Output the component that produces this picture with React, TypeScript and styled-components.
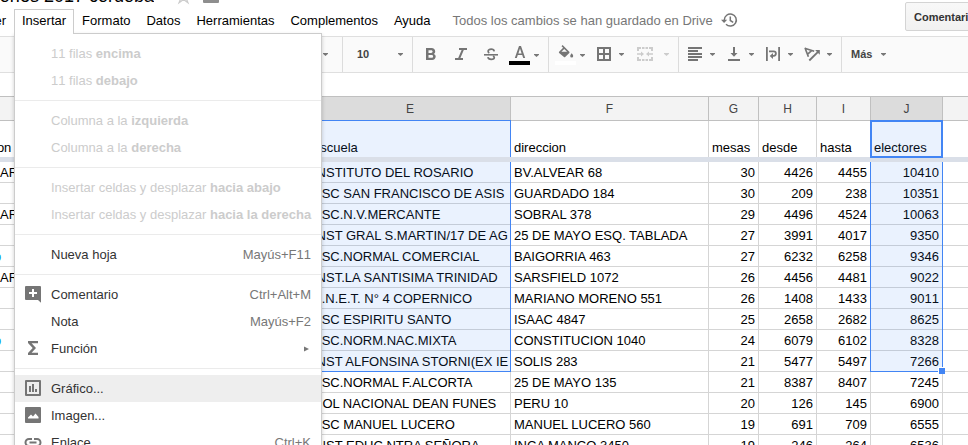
import React from "react";
import styled, { createGlobalStyle } from "styled-components";

const Global = createGlobalStyle`
  html, body { margin: 0; padding: 0; background: #fff; overflow: hidden; }
  * { box-sizing: border-box; }
  body { font: 13px "Liberation Sans", Arial, sans-serif; color: #000; }
  svg { display: block; flex: none; }
`;

const Screen = styled.div`
  position: relative;
  width: 968px;
  height: 445px;
  overflow: hidden;
  display: flex;
  flex-direction: column;
`;

/* ---------- title and menu bar ---------- */
const Header = styled.header`
  display: flex;
  height: 36px;
  flex: none;
`;
const HeaderMain = styled.div`
  width: 905px;
  flex: none;
`;
const TitleRow = styled.div`
  display: flex;
  height: 9px;
  overflow: hidden;
`;
const Title = styled.div`
  width: 154px;
  height: 9px;
  display: flex;
  justify-content: flex-end;
  align-items: flex-start;
  font-size: 18px;
  line-height: 20px;
  white-space: nowrap;
  overflow: hidden;
  span { margin-top: -14px; }
`;
const StarIcon = styled.svg`
  margin-left: 23px;
  margin-top: -13px;
`;
const FolderIcon = styled.svg`
  margin-left: 13px;
`;
const MenuBar = styled.nav`
  display: flex;
  height: 24px;
  line-height: 23px;
  white-space: nowrap;
`;
const MenuTitle = styled.div`
  padding: 0 8px;
`;
const CutTitle = styled.div`
  width: 14px;
  padding-right: 8px;
  display: flex;
  justify-content: flex-end;
  overflow: hidden;
`;
const SaveState = styled.div`
  margin-left: 14px;
  color: #777;
  display: flex;
  svg { margin: 2px 0 0 7px; }
`;
const CommentsButton = styled.button`
  width: 110px;
  height: 29px;
  margin-top: 2px;
  flex: none;
  padding: 0 8px;
  border: 1px solid #d4d4d4;
  border-radius: 2px;
  background: linear-gradient(#f8f8f8, #f1f1f1);
  font: bold 11px "Liberation Sans", Arial, sans-serif;
  line-height: 26px;
  color: #333;
  text-align: left;
`;

/* ---------- toolbar ---------- */
const Toolbar = styled.div`
  display: flex;
  flex: none;
  height: 37px;
  border-top: 1px solid #dfdfdf;
  border-bottom: 1px solid #dfdfdf;
  background: #fafafa;
`;
const Group = styled.div<{ $w: number; $last?: boolean }>`
  display: flex;
  width: ${(p) => p.$w}px;
  flex: none;
  border-right: ${(p) => (p.$last ? "none" : "1px solid #dcdcdc")};
  color: #757575;
`;
const ToolIcon = styled.svg<{ $ml: number }>`
  margin: 9px 0 0 ${(p) => p.$ml}px;
`;
const ToolText = styled.div<{ $ml: number; $w: number }>`
  margin-left: ${(p) => p.$ml}px;
  width: ${(p) => p.$w}px;
  line-height: 34px;
  font-size: 11px;
  font-weight: bold;
  color: #444;
`;
const Swatched = styled.div<{ $ml: number; $color: string }>`
  margin: 8px 0 0 ${(p) => p.$ml}px;
  width: 21px;
  height: 20px;
  border-bottom: 4px solid ${(p) => p.$color};
  display: flex;
  justify-content: center;
`;
const CaretIcon = styled.svg<{ $ml: number; $low?: boolean }>`
  margin: ${(p) => (p.$low ? 17 : 16)}px 0 0 ${(p) => p.$ml}px;
`;
const Caret = ({ ml, light, low }: { ml: number; light?: boolean; low?: boolean }) => (
  <CaretIcon $ml={ml} $low={low} width="5" height="3" viewBox="0 0 5 3">
    <path d="M0 0h5v.8L2.500 3 0 .8z" fill={light ? "#ccc" : "#777"} />
  </CaretIcon>
);

/* ---------- sheet ---------- */
const FormulaBar = styled.div`
  height: 23px;
  flex: none;
`;
const Sheet = styled.div`
  position: relative;
  flex: 1;
  overflow: hidden;
`;
const columns = "310px 201px 198px 50px 58px 54px 72px 1fr";
const ColumnHeads = styled.div`
  display: grid;
  grid-template-columns: ${columns};
  height: 25px;
  border-top: 1px solid #c0c0c0;
  border-bottom: 1px solid #c0c0c0;
`;
const ColumnHead = styled.div<{ $on?: boolean }>`
  border-right: 1px solid #c0c0c0;
  background: ${(p) => (p.$on ? "#dcdcdc" : "#f3f3f3")};
  color: #444;
  font-size: 12px;
  line-height: 24px;
  height: 23px;
  text-align: center;
  &:last-child { border-right: none; }
`;
const Row = styled.div<{ $frozen?: boolean }>`
  display: grid;
  grid-template-columns: ${columns};
  height: ${(p) => (p.$frozen ? 36 : 21)}px;
`;
const Divider = styled.div`
  height: 5px;
  background: #dadfe8;
`;
const Cell = styled.div<{ $num?: boolean; $frozen?: boolean }>`
  display: flex;
  align-items: flex-end;
  justify-content: ${(p) => (p.$num ? "flex-end" : "flex-start")};
  padding: 0 3px;
  border-right: 1px solid #d5d5d5;
  border-bottom: ${(p) => (p.$frozen ? "none" : "1px solid #d5d5d5")};
  line-height: 19px;
  font-kerning: ${(p) => (p.$num ? "none" : "auto")};
  white-space: nowrap;
  overflow: hidden;
  &:last-child { border-right: none; }
`;
const EdgeCell = styled(Cell)`
  padding: 0;
`;
const HeadEdgeCell = styled(Cell)`
  padding: 0;
  span { margin-left: -6px; }
`;
const LinkText = styled.span`
  color: #039be5;
  margin-left: -6px;
`;

const Selection = styled.div<{ $x: number; $y: number; $w: number; $h: number; $border: string }>`
  position: absolute;
  left: ${(p) => p.$x}px;
  top: ${(p) => p.$y}px;
  width: ${(p) => p.$w}px;
  height: ${(p) => p.$h}px;
  background: rgba(66, 133, 244, 0.11);
  border-style: solid;
  border-color: #4285f4;
  border-width: ${(p) => p.$border};
`;
const FillHandle = styled.div`
  position: absolute;
  left: 938px;
  top: 271px;
  width: 7px;
  height: 7px;
  background: #4285f4;
  border: 1px solid #fff;
  border-width: 1px 0 0 1px;
`;

/* ---------- open menu ---------- */
const OpenMenu = styled.div`
  position: absolute;
  left: 14px;
  top: 9px;
  width: 308px;
`;
const OpenTab = styled.div`
  position: relative;
  z-index: 1;
  width: 60px;
  height: 25px;
  padding-left: 7px;
  border: 1px solid #ccc;
  border-bottom: none;
  background: #fff;
  line-height: 21px;
`;
const Panel = styled.div`
  margin-top: -1px;
  height: 460px;
  padding-top: 6px;
  border: 1px solid #ccc;
  background: #fff;
  box-shadow: 0 2px 4px rgba(0, 0, 0, 0.2);
`;
const Item = styled.div<{ $off?: boolean; $hot?: boolean }>`
  display: flex;
  height: 27px;
  line-height: 28px;
  padding-right: 10px;
  font-kerning: none;
  color: ${(p) => (p.$off ? "#ccc" : "#333")};
  background: ${(p) => (p.$hot ? "#eee" : "transparent")};
  white-space: nowrap;
`;
const IconSlot = styled.div`
  width: 36px;
  padding: 4px 0 0 9px;
  flex: none;
  color: #757575;
`;
const Label = styled.div`
  flex: 1;
`;
const Shortcut = styled.div`
  color: #777;
`;
const Arrow = styled.svg`
  margin: 11px 2px 0 0;
`;
const Rule = styled.div`
  height: 1px;
  margin: 6px 0;
  background: #ebebeb;
`;

const Glyph = ({ children }: { children: React.ReactNode }) => (
  <svg width="18" height="18" viewBox="0 0 18 18" fill="currentColor">
    {children}
  </svg>
);

type Entry =
  | "rule"
  | { text: string; bold?: string; key?: string; off?: boolean; hot?: boolean; sub?: boolean; icon?: React.ReactNode };

const entries: Entry[] = [
  { text: "11 filas ", bold: "encima", off: true },
  { text: "11 filas ", bold: "debajo", off: true },
  "rule",
  { text: "Columna a la ", bold: "izquierda", off: true },
  { text: "Columna a la ", bold: "derecha", off: true },
  "rule",
  { text: "Insertar celdas y desplazar ", bold: "hacia abajo", off: true },
  { text: "Insertar celdas y desplazar ", bold: "hacia la derecha", off: true },
  "rule",
  { text: "Nueva hoja", key: "Mayús+F11" },
  "rule",
  {
    text: "Comentario",
    key: "Ctrl+Alt+M",
    icon: (
      <Glyph>
        <path fillRule="evenodd" d="M2 1h14a1 1 0 0 1 1 1v15.700l-3-2.700H2a1 1 0 0 1-1-1V2a1 1 0 0 1 1-1zm6 3v3H5v2h3v3h2V9h3V7h-3V4z" />
      </Glyph>
    ),
  },
  { text: "Nota", key: "Mayús+F2" },
  {
    text: "Función",
    sub: true,
    icon: (
      <Glyph>
        <path d="M4 2h10v2.200H7.600L12 9l-4.400 4.800H14V16H4v-2l4.700-5L4 4z" />
      </Glyph>
    ),
  },
  "rule",
  {
    text: "Gráfico...",
    hot: true,
    icon: (
      <Glyph>
        <path fillRule="evenodd" d="M2 1h14a1 1 0 0 1 1 1v14a1 1 0 0 1-1 1H2a1 1 0 0 1-1-1V2a1 1 0 0 1 1-1zm1 2v12h12V3zM5 7h2v6H5zM8 5h2v8H8zM11 10h2v3h-2z" />
      </Glyph>
    ),
  },
  {
    text: "Imagen...",
    icon: (
      <Glyph>
        <path fillRule="evenodd" d="M2 1h14a1 1 0 0 1 1 1v14a1 1 0 0 1-1 1H2a1 1 0 0 1-1-1V2a1 1 0 0 1 1-1zm2 11.500h10.500V11l-3-3.500L9 10.500 7 8.500l-3 3z" />
      </Glyph>
    ),
  },
  {
    text: "Enlace...",
    key: "Ctrl+K",
    icon: (
      <Glyph>
        <path
          fill="none"
          stroke="currentColor"
          strokeWidth="2"
          d="M8 6H5a3.500 3.500 0 0 0 0 7h3M10 6h3a3.500 3.500 0 0 1 0 7h-3M5.500 9.500h7"
        />
      </Glyph>
    ),
  },
];

const rows: string[][] = [
  ["AR", "INSTITUTO DEL ROSARIO", "BV.ALVEAR 68", "30", "4426", "4455", "10410"],
  ["", "ESC SAN FRANCISCO DE ASIS", "GUARDADO 184", "30", "209", "238", "10351"],
  ["AR", "ESC.N.V.MERCANTE", "SOBRAL 378", "29", "4496", "4524", "10063"],
  ["", "INST GRAL S.MARTIN/17 DE AG", "25 DE MAYO ESQ. TABLADA", "27", "3991", "4017", "9350"],
  ["o", "ESC.NORMAL COMERCIAL", "BAIGORRIA 463", "27", "6232", "6258", "9346"],
  ["AR", "INST.LA SANTISIMA TRINIDAD", "SARSFIELD 1072", "26", "4456", "4481", "9022"],
  ["", "E.N.E.T. N° 4 COPERNICO", "MARIANO MORENO 551", "26", "1408", "1433", "9011"],
  ["", "ESC ESPIRITU SANTO", "ISAAC 4847", "25", "2658", "2682", "8625"],
  ["o", "ESC.NORM.NAC.MIXTA", "CONSTITUCION 1040", "24", "6079", "6102", "8328"],
  ["", "INST ALFONSINA STORNI(EX IE", "SOLIS 283", "21", "5477", "5497", "7266"],
  ["", "ESC.NORMAL F.ALCORTA", "25 DE MAYO 135", "21", "8387", "8407", "7245"],
  ["", "COL NACIONAL DEAN FUNES", "PERU 10", "20", "126", "145", "6900"],
  ["", "ESC MANUEL LUCERO", "MANUEL LUCERO 560", "19", "691", "709", "6555"],
  ["", "INST EDUC.NTRA SEÑORA", "INCA MANCO 3450", "19", "246", "264", "6536"],
];

const Tool = ({ ml, children, color }: { ml: number; children: React.ReactNode; color?: string }) => (
  <ToolIcon $ml={ml} width="18" height="18" viewBox="0 0 18 18" fill={color ?? "currentColor"}>
    {children}
  </ToolIcon>
);

export default function App() {
  return (
    <Screen>
      <Global />
      <Header>
        <HeaderMain>
          <TitleRow>
            <Title>
              <span>elecciones 2017 cordoba</span>
            </Title>
            <StarIcon width="13" height="18" viewBox="0 0 13 18">
              <path d="M6.500 3l1.600 4.700h4.600l-3.700 3 1.900 5-4.400-3.200-4.400 3.200 1.900-5-3.700-3h4.600z" fill="none" stroke="#ccc" strokeWidth="1.300" />
            </StarIcon>
            <FolderIcon width="16" height="3" viewBox="0 0 16 3">
              <path d="M0 0h16v2.300l-.7.7H.7L0 2.300z" fill="#8e8e8e" />
            </FolderIcon>
          </TitleRow>
          <MenuBar>
            <CutTitle>Ver</CutTitle>
            <MenuTitle>Insertar</MenuTitle>
            <MenuTitle>Formato</MenuTitle>
            <MenuTitle>Datos</MenuTitle>
            <MenuTitle>Herramientas</MenuTitle>
            <MenuTitle>Complementos</MenuTitle>
            <MenuTitle>Ayuda</MenuTitle>
            <SaveState>
              Todos los cambios se han guardado en Drive
              <svg width="18" height="18" viewBox="0 0 18 18" fill="none" stroke="#757575" strokeWidth="1.500">
                <path d="M4.300 9a6 6 0 1 1 1.700 4.200M10.300 5.500v4l2.900 1.800" />
                <path d="M1 8.700h6.200L4.100 12z" fill="#757575" stroke="none" />
              </svg>
            </SaveState>
          </MenuBar>
        </HeaderMain>
        <CommentsButton>Comentarios</CommentsButton>
      </Header>

      <Toolbar>
        <Group $w={343}>
          <Caret ml={323} />
        </Group>
        <Group $w={70}>
          <ToolText $ml={14} $w={41}>10</ToolText>
          <Caret ml={0} />
        </Group>
        <Group $w={136}>
          <Tool ml={8}>
            <path fillRule="evenodd" d="M12.800 8c.9-.6 1.400-1.500 1.400-2.500C14.200 3.400 12.700 2 10.600 2H5v12h6.100c2.100 0 3.600-1.500 3.600-3.400 0-1.200-.7-2.200-1.900-2.600zM7.500 4.200h2.700c.8 0 1.400.6 1.400 1.350s-.6 1.350-1.400 1.350H7.500zm3.200 7.600H7.500V9h3.200c.8 0 1.400.6 1.400 1.400s-.6 1.400-1.400 1.400z" />
          </Tool>
          <Tool ml={13}>
            <path d="M7 2v2h2.600l-3.400 8H3v2h8v-2H8.400l3.400-8H15V2z" />
          </Tool>
          <Tool ml={12}>
            <path d="M2 8h14v1.600H2z" />
            <path d="M12.200 5.300C12 3.900 10.900 3.200 9.200 3.200S6.100 4 6.100 5.300c0 .8.400 1.300 1.200 1.700M11 10c.9.400 1.300.8 1.300 1.600 0 1.100-1.200 1.800-3 1.800S6.100 12.600 5.900 11.200" fill="none" stroke="currentColor" strokeWidth="1.700" />
          </Tool>
          <Swatched $ml={9} $color="#000">
            <svg width="18" height="14" viewBox="0 0 18 14">
              <path fillRule="evenodd" d="M8 1h2l4.200 12h-2l-1-2.900H6.800l-1 2.900h-2zm1 2.600L7.400 8.400h3.200z" fill="currentColor" />
            </svg>
          </Swatched>
          <Caret ml={4} low />
        </Group>
        <Group $w={130}>
          <Swatched $ml={6} $color="#fff">
            <svg width="18" height="14" viewBox="0 0 18 14" fill="currentColor">
              <path fillRule="evenodd" d="M4.500 1.200L5.600.1l6.700 6.700a.8.8 0 0 1 0 1.100l-4.100 4.100a.9.900 0 0 1-1.200 0L2.100 7.900a.8.8 0 0 1 0-1.100l4-4zm2.700 2.700L4.400 6.800h5.700z" />
              <path d="M14.700 8.200s1.500 1.700 1.500 2.700a1.500 1.500 0 0 1-3 0c0-1 1.500-2.700 1.500-2.700z" />
            </svg>
          </Swatched>
          <Caret ml={4} low />
          <Tool ml={10}>
            <path fillRule="evenodd" d="M2 1h14v14H2zm2 2v4h4V3zm6 0v4h4V3zM4 9v4h4V9zm6 0v4h4V9z" />
          </Tool>
          <Caret ml={6} />
          <Tool ml={12} color="#ccc">
            <path d="M1 1h4v2H3v2H1zM6 1h2.500v2H6zM9.500 1H12v2H9.500zM13 1h4v4h-2V3h-2zM1 11h2v2h2v2H1zM6 13h2.500v2H6zM9.500 13H12v2H9.500zM15 11h2v4h-4v-2h2zM1 7.200h4V5.500L8 8l-3 2.500V8.800H1zM17 7.200h-4V5.500L10 8l3 2.500V8.800h4z" />
          </Tool>
          <Caret ml={10} light />
        </Group>
        <Group $w={163}>
          <Tool ml={7}>
            <path d="M2 1h14v2H2zM2 4h10v2H2zM2 7h14v2H2zM2 10h14v2H2zM2 13h10v2H2z" />
          </Tool>
          <Caret ml={6} />
          <Tool ml={10}>
            <path d="M3 13h12v2H3zM8 1h2v6h2.500L9 10.700 5.500 7H8z" />
          </Tool>
          <Caret ml={6} />
          <Tool ml={10}>
            <path d="M2 1h1.800v14H2zM14.200 1H16v14h-1.800z" />
            <path d="M5 5.400h4.700a2.200 2.200 0 0 1 0 4.400H8.500" fill="none" stroke="currentColor" strokeWidth="1.800" />
            <path d="M9 7v6l-3.300-3z" />
          </Tool>
          <Caret ml={6} />
          <Tool ml={10}>
            <path d="M1.700 2.200l9.500 3M2 2l3.400 8.800M8.600 4.600L4.400 8.300" fill="none" stroke="currentColor" strokeWidth="1.700" />
            <path d="M6.300 14.500L15 5.800" fill="none" stroke="currentColor" strokeWidth="1.900" />
            <path d="M16.800 4v4.700l-4.700-4.700z" />
          </Tool>
          <Caret ml={6} />
        </Group>
        <Group $w={126} $last>
          <ToolText $ml={9} $w={30}>Más</ToolText>
          <Caret ml={0} />
        </Group>
      </Toolbar>

      <FormulaBar />

      <Sheet>
        <ColumnHeads>
          <ColumnHead />
          <ColumnHead $on>E</ColumnHead>
          <ColumnHead>F</ColumnHead>
          <ColumnHead>G</ColumnHead>
          <ColumnHead>H</ColumnHead>
          <ColumnHead>I</ColumnHead>
          <ColumnHead $on>J</ColumnHead>
          <ColumnHead />
        </ColumnHeads>
        <Row $frozen>
          <HeadEdgeCell $frozen><span>ion</span></HeadEdgeCell>
          <Cell $frozen>escuela</Cell>
          <Cell $frozen>direccion</Cell>
          <Cell $frozen>mesas</Cell>
          <Cell $frozen>desde</Cell>
          <Cell $frozen>hasta</Cell>
          <Cell $frozen>electores</Cell>
          <Cell $frozen />
        </Row>
        <Divider />
        {rows.map((r, i) => (
          <Row key={i}>
            <EdgeCell>{r[0] === "o" ? <LinkText>o</LinkText> : r[0]}</EdgeCell>
            {r.slice(1).map((v, j) => (
              <Cell key={j} $num={j > 1}>{v}</Cell>
            ))}
            <Cell />
          </Row>
        ))}
        <Selection $x={310} $y={24} $w={201} $h={37} $border="1px 1px 0 0" />
        <Selection $x={310} $y={66} $w={201} $h={210} $border="0 1px 1px 0" />
        <Selection $x={870} $y={24} $w={73} $h={38} $border="2px" />
        <Selection $x={870} $y={66} $w={73} $h={210} $border="0 1px 1px 1px" />
        <FillHandle />
      </Sheet>

      <OpenMenu>
        <OpenTab>Insertar</OpenTab>
        <Panel>
          {entries.map((e, i) =>
            e === "rule" ? (
              <Rule key={i} />
            ) : (
              <Item key={i} $off={e.off} $hot={e.hot}>
                <IconSlot>{e.icon}</IconSlot>
                <Label>
                  {e.text}
                  {e.bold && <b>{e.bold}</b>}
                </Label>
                {e.key && <Shortcut>{e.key}</Shortcut>}
                {e.sub && (
                  <Arrow width="5" height="6" viewBox="0 0 5 6">
                    <path d="M0 .5l5 2.500-5 2.500z" fill="#777" />
                  </Arrow>
                )}
              </Item>
            ),
          )}
        </Panel>
      </OpenMenu>
    </Screen>
  );
}
